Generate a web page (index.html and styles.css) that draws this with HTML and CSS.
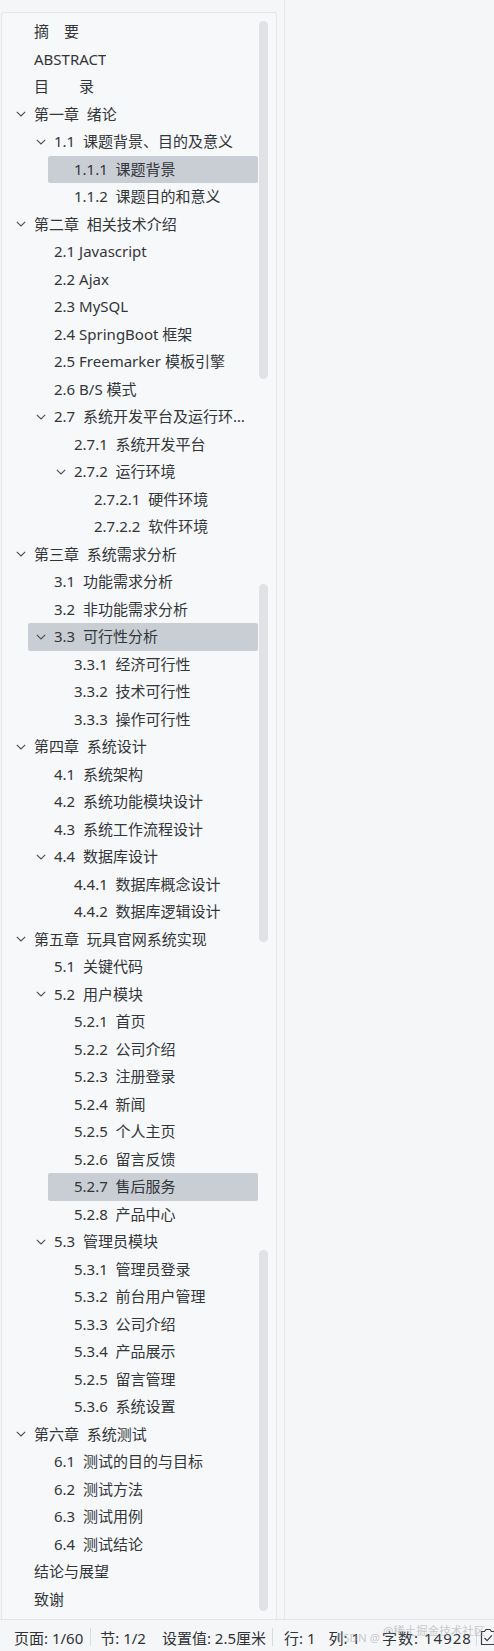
FILE: index.html
```html
<!DOCTYPE html>
<html lang="zh-CN">
<head>
<meta charset="utf-8">
<title>目录导航</title>
<link rel="stylesheet" href="styles.css">
</head>
<body>
<div class="app">
  <div class="main">
    <aside class="nav-panel">
      <ul class="toc">
        <li class="row lv1"><span class="caret none"></span><span class="label">摘　要</span></li>
        <li class="row lv1"><span class="caret none"></span><span class="label">ABSTRACT</span></li>
        <li class="row lv1"><span class="caret none"></span><span class="label">目　　录</span></li>
        <li class="row lv1"><span class="caret"><svg viewBox="0 0 10 6"><path d="M0.8 0.8L5 5L9.2 0.8"/></svg></span><span class="label">第一章  绪论</span></li>
        <li class="row lv2"><span class="caret"><svg viewBox="0 0 10 6"><path d="M0.8 0.8L5 5L9.2 0.8"/></svg></span><span class="label">1.1  课题背景、目的及意义</span></li>
        <li class="row lv3 active"><span class="caret none"></span><span class="label">1.1.1  课题背景</span></li>
        <li class="row lv3"><span class="caret none"></span><span class="label">1.1.2  课题目的和意义</span></li>
        <li class="row lv1"><span class="caret"><svg viewBox="0 0 10 6"><path d="M0.8 0.8L5 5L9.2 0.8"/></svg></span><span class="label">第二章  相关技术介绍</span></li>
        <li class="row lv2"><span class="caret none"></span><span class="label">2.1 Javascript</span></li>
        <li class="row lv2"><span class="caret none"></span><span class="label">2.2 Ajax</span></li>
        <li class="row lv2"><span class="caret none"></span><span class="label">2.3 MySQL</span></li>
        <li class="row lv2"><span class="caret none"></span><span class="label">2.4 SpringBoot 框架</span></li>
        <li class="row lv2"><span class="caret none"></span><span class="label">2.5 Freemarker 模板引擎</span></li>
        <li class="row lv2"><span class="caret none"></span><span class="label">2.6 B/S 模式</span></li>
        <li class="row lv2"><span class="caret"><svg viewBox="0 0 10 6"><path d="M0.8 0.8L5 5L9.2 0.8"/></svg></span><span class="label">2.7  系统开发平台及运行环境</span></li>
        <li class="row lv3"><span class="caret none"></span><span class="label">2.7.1  系统开发平台</span></li>
        <li class="row lv3"><span class="caret"><svg viewBox="0 0 10 6"><path d="M0.8 0.8L5 5L9.2 0.8"/></svg></span><span class="label">2.7.2  运行环境</span></li>
        <li class="row lv4"><span class="caret none"></span><span class="label">2.7.2.1  硬件环境</span></li>
        <li class="row lv4"><span class="caret none"></span><span class="label">2.7.2.2  软件环境</span></li>
        <li class="row lv1"><span class="caret"><svg viewBox="0 0 10 6"><path d="M0.8 0.8L5 5L9.2 0.8"/></svg></span><span class="label">第三章  系统需求分析</span></li>
        <li class="row lv2"><span class="caret none"></span><span class="label">3.1  功能需求分析</span></li>
        <li class="row lv2"><span class="caret none"></span><span class="label">3.2  非功能需求分析</span></li>
        <li class="row lv2 active"><span class="caret"><svg viewBox="0 0 10 6"><path d="M0.8 0.8L5 5L9.2 0.8"/></svg></span><span class="label">3.3  可行性分析</span></li>
        <li class="row lv3"><span class="caret none"></span><span class="label">3.3.1  经济可行性</span></li>
        <li class="row lv3"><span class="caret none"></span><span class="label">3.3.2  技术可行性</span></li>
        <li class="row lv3"><span class="caret none"></span><span class="label">3.3.3  操作可行性</span></li>
        <li class="row lv1"><span class="caret"><svg viewBox="0 0 10 6"><path d="M0.8 0.8L5 5L9.2 0.8"/></svg></span><span class="label">第四章  系统设计</span></li>
        <li class="row lv2"><span class="caret none"></span><span class="label">4.1  系统架构</span></li>
        <li class="row lv2"><span class="caret none"></span><span class="label">4.2  系统功能模块设计</span></li>
        <li class="row lv2"><span class="caret none"></span><span class="label">4.3  系统工作流程设计</span></li>
        <li class="row lv2"><span class="caret"><svg viewBox="0 0 10 6"><path d="M0.8 0.8L5 5L9.2 0.8"/></svg></span><span class="label">4.4  数据库设计</span></li>
        <li class="row lv3"><span class="caret none"></span><span class="label">4.4.1  数据库概念设计</span></li>
        <li class="row lv3"><span class="caret none"></span><span class="label">4.4.2  数据库逻辑设计</span></li>
        <li class="row lv1"><span class="caret"><svg viewBox="0 0 10 6"><path d="M0.8 0.8L5 5L9.2 0.8"/></svg></span><span class="label">第五章  玩具官网系统实现</span></li>
        <li class="row lv2"><span class="caret none"></span><span class="label">5.1  关键代码</span></li>
        <li class="row lv2"><span class="caret"><svg viewBox="0 0 10 6"><path d="M0.8 0.8L5 5L9.2 0.8"/></svg></span><span class="label">5.2  用户模块</span></li>
        <li class="row lv3"><span class="caret none"></span><span class="label">5.2.1  首页</span></li>
        <li class="row lv3"><span class="caret none"></span><span class="label">5.2.2  公司介绍</span></li>
        <li class="row lv3"><span class="caret none"></span><span class="label">5.2.3  注册登录</span></li>
        <li class="row lv3"><span class="caret none"></span><span class="label">5.2.4  新闻</span></li>
        <li class="row lv3"><span class="caret none"></span><span class="label">5.2.5  个人主页</span></li>
        <li class="row lv3"><span class="caret none"></span><span class="label">5.2.6  留言反馈</span></li>
        <li class="row lv3 active"><span class="caret none"></span><span class="label">5.2.7  售后服务</span></li>
        <li class="row lv3"><span class="caret none"></span><span class="label">5.2.8  产品中心</span></li>
        <li class="row lv2"><span class="caret"><svg viewBox="0 0 10 6"><path d="M0.8 0.8L5 5L9.2 0.8"/></svg></span><span class="label">5.3  管理员模块</span></li>
        <li class="row lv3"><span class="caret none"></span><span class="label">5.3.1  管理员登录</span></li>
        <li class="row lv3"><span class="caret none"></span><span class="label">5.3.2  前台用户管理</span></li>
        <li class="row lv3"><span class="caret none"></span><span class="label">5.3.3  公司介绍</span></li>
        <li class="row lv3"><span class="caret none"></span><span class="label">5.3.4  产品展示</span></li>
        <li class="row lv3"><span class="caret none"></span><span class="label">5.2.5  留言管理</span></li>
        <li class="row lv3"><span class="caret none"></span><span class="label">5.3.6  系统设置</span></li>
        <li class="row lv1"><span class="caret"><svg viewBox="0 0 10 6"><path d="M0.8 0.8L5 5L9.2 0.8"/></svg></span><span class="label">第六章  系统测试</span></li>
        <li class="row lv2"><span class="caret none"></span><span class="label">6.1  测试的目的与目标</span></li>
        <li class="row lv2"><span class="caret none"></span><span class="label">6.2  测试方法</span></li>
        <li class="row lv2"><span class="caret none"></span><span class="label">6.3  测试用例</span></li>
        <li class="row lv2"><span class="caret none"></span><span class="label">6.4  测试结论</span></li>
        <li class="row lv1"><span class="caret none"></span><span class="label">结论与展望</span></li>
        <li class="row lv1"><span class="caret none"></span><span class="label">致谢</span></li>
      </ul>
      <div class="scroll-track">
        <div class="thumb thumb-a"></div>
        <div class="thumb thumb-b"></div>
        <div class="thumb thumb-c"></div>
      </div>
    </aside>
    <div class="gutter"></div>
    <div class="doc"></div>
  </div>
  <footer class="status">
    <span class="item">页面: 1/60</span>
    <span class="sep sep-a"></span>
    <span class="item">节: 1/2</span>
    <span class="item setting">设置值: 2.5厘米</span>
    <span class="sep sep-b"></span>
    <span class="item">行: 1</span>
    <span class="item col">列: 1</span>
    <span class="item words">字数: 14928</span>
    <span class="sep sep-c"></span>
    <span class="check"><svg viewBox="0 0 16 18"><path class="box" d="M1.5 3.5h3l1.5-2h4l1.5 2h3v13h-13z"/><path class="tick" d="M4.5 10l2.6 2.6 4.8-5.2"/></svg></span>
    <span class="watermark wm-a">CSDN @</span>
    <span class="watermark wm-b">@稀土掘金技术社区</span>
  </footer>
</div>
</body>
</html>
```

FILE: styles.css
```css
* { box-sizing: border-box; }

html, body {
  margin: 0;
  padding: 0;
}

body {
  background: #f5f6f8;
  font-family: "Noto Sans", "Noto Sans CJK SC", "Liberation Sans", sans-serif;
  color: #333639;
  width: 494px;
  height: 1651px;
  overflow: hidden;
}

.app {
  display: flex;
  flex-direction: column;
  height: 1651px;
}

.main {
  display: flex;
  height: 1619px;
}

.nav-panel {
  margin: 12px 0 0 1px;
  width: 276px;
  height: 1607px;
  background: #f6f8fa;
  border: 1px solid #e4e6e9;
  border-bottom: none;
  border-radius: 3px 3px 0 0;
  display: flex;
  padding-left: 5px;
}

.toc {
  list-style: none;
  margin: 0;
  padding: 5px 0 0 0;
  width: 251px;
  flex: none;
}

.row {
  display: flex;
  align-items: center;
  height: 27.5px;
  padding-left: 8px;
  padding-right: 12px;
  font-size: 15px;
  white-space: pre;
}

.row.lv1 { margin-left: 1px; }
.row.lv2 { margin-left: 21px; }
.row.lv3 { margin-left: 41px; }
.row.lv4 { margin-left: 61px; }

.row.active {
  background: #c9ced5;
  border-radius: 2px;
}

.caret {
  flex: none;
  width: 10px;
  height: 6px;
  margin-right: 8px;
  display: flex;
}

.caret svg {
  width: 10px;
  height: 6px;
  overflow: visible;
}

.caret path {
  fill: none;
  stroke: #4a4d52;
  stroke-width: 1.1;
}

.label {
  overflow: hidden;
  text-overflow: ellipsis;
  min-width: 0;
  line-height: 27.5px;
}

.scroll-track {
  flex: none;
  width: 9px;
  margin-left: 1px;
  display: flex;
  flex-direction: column;
}

.thumb {
  width: 9px;
  background: #e0e2e5;
  border-radius: 5px;
}

.thumb-a { margin-top: 8px; height: 358px; }
.thumb-b { margin-top: 205px; height: 358px; }
.thumb-c { margin-top: 308px; height: 361px; }

.gutter {
  width: 7px;
  flex: none;
}

.doc {
  flex: 1;
  border-left: 1px solid #e6e8eb;
}

.status {
  position: relative;
  height: 32px;
  border-top: 1px solid #e2e4e7;
  display: flex;
  align-items: center;
  padding: 3px 0 0 14px;
  font-size: 15px;
  color: #2f3236;
  white-space: nowrap;
}

.status .sep {
  width: 1px;
  height: 18px;
  background: #d9dbde;
  flex: none;
}

.sep-a { margin: 0 9px 0 7px; }
.sep-b { margin: 0 11px 0 6px; }
.sep-c { margin: 0 3px 0 4px; }

.status .setting { margin-left: 16px; }
.status .col { margin-left: 13px; }
.status .words { margin-left: 22px; letter-spacing: 1px; }

.check {
  display: flex;
  flex: none;
}

.check svg {
  width: 16px;
  height: 18px;
}

.check .box {
  fill: none;
  stroke: #3a3d41;
  stroke-width: 1.2;
}

.check .tick {
  fill: none;
  stroke: #3a3d41;
  stroke-width: 1.3;
}

.watermark {
  position: absolute;
  color: rgba(150, 153, 158, 0.5);
  font-size: 11.5px;
  pointer-events: none;
}

.wm-a { left: 336px; top: 10px; }
.wm-b { left: 383px; top: 2px; }
```
